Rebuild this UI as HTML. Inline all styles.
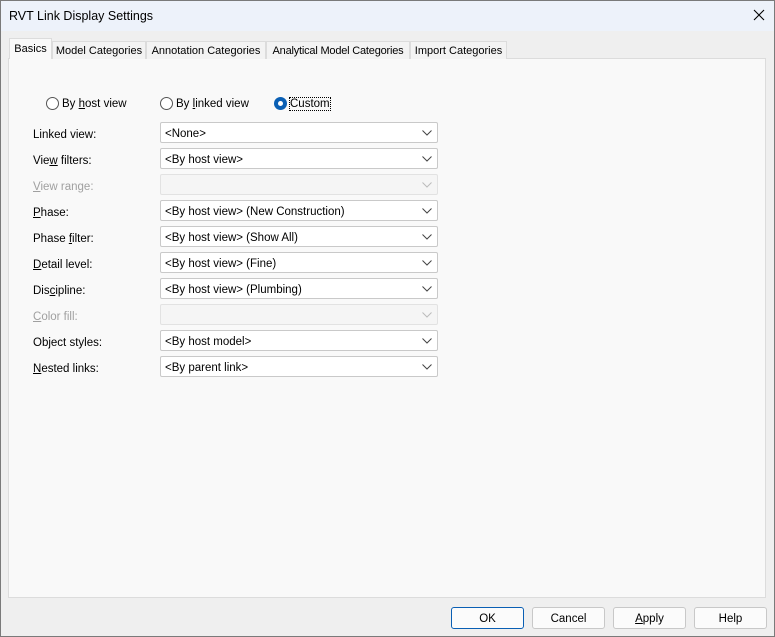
<!DOCTYPE html>
<html><head><style>
*{box-sizing:border-box;margin:0;padding:0}
body{width:775px;height:637px;background:#efefef;font-family:"Liberation Sans",sans-serif;font-size:11.5px;color:#000;position:relative;overflow:hidden}
.frame{position:absolute;left:0;top:0;width:775px;height:637px;border:1px solid #7a7a7a;pointer-events:none}
.title{position:absolute;left:0;top:0;width:775px;height:31px;background:#edf2fa}
.title span{position:absolute;left:9px;top:9px;font-size:12.5px}
.x{position:absolute;right:10px;top:9px}
.panel{position:absolute;left:8px;top:58px;width:758px;height:540px;background:#f9f9f9;border:1px solid #dcdcdc}
.tab{position:absolute;top:41px;height:18px;border:1px solid #dcdcdc;border-bottom:none;background:#f3f3f3;padding-top:3px;text-align:center;white-space:nowrap;overflow:hidden;font-size:11px}
.tab.sel{top:38px;height:21px;background:#f9f9f9;padding-top:4px}
.lbl{position:absolute;left:33px;top:0}
.dis{color:#a0a0a0}
.cb{position:absolute;left:160px;width:278px;height:21px;background:#fff;border:1px solid #c9c9c9;border-radius:2px;padding:5px 0 0 4px}
.cb.d{background:#f5f5f5;border-color:#e2e2e2}
.cb svg{position:absolute;right:5px;top:7px}
.radio{position:absolute;top:97px;display:flex;align-items:center}
.rc{width:13px;height:13px;border-radius:50%;border:1px solid #555;background:#fff;margin-right:3px}
.rc.on{border:none;background:#0a5fb4;display:flex;align-items:center;justify-content:center}
.rc.on::after{content:"";width:5px;height:5px;border-radius:50%;background:#fff}
.btn{position:absolute;top:607px;width:73px;height:22px;border:1px solid #c8c8c8;border-radius:3px;background:#fbfbfb;text-align:center;padding-top:5px}
u{text-decoration:underline}
</style></head><body>
<div class="title"><span>RVT Link Display Settings</span>
<svg class="x" width="12" height="12" viewBox="0 0 12 12"><path d="M1 1L11 11M11 1L1 11" stroke="#000" stroke-width="1.1"/></svg></div>
<div class="panel"></div>
<div class="tab sel" style="left:9px;width:43px">Basics</div>
<div class="tab" style="left:52px;width:94px">Model Categories</div>
<div class="tab" style="left:146px;width:120px">Annotation Categories</div>
<div class="tab" style="left:266px;width:144px;letter-spacing:-0.2px">Analytical Model Categories</div>
<div class="tab" style="left:410px;width:97px">Import Categories</div>

<div class="radio" style="left:46px"><div class="rc"></div><span>By <u>h</u>ost view</span></div>
<div class="radio" style="left:160px"><div class="rc"></div><span>By <u>l</u>inked view</span></div>
<div class="radio" style="left:274px"><div class="rc on"></div><span style="outline:1px dotted #000">Custom</span></div>

<div class="lbl" style="top:129px">Linked view:</div><div class="cb" style="top:122px">&lt;None&gt;<svg width="10" height="6"><path d="M0.5 0.5L5 5L9.5 0.5" fill="none" stroke="#444"/></svg></div>
<div class="lbl" style="top:155px">Vie<u>w</u> filters:</div><div class="cb" style="top:148px">&lt;By host view&gt;<svg width="10" height="6"><path d="M0.5 0.5L5 5L9.5 0.5" fill="none" stroke="#444"/></svg></div>
<div class="lbl dis" style="top:181px"><u>V</u>iew range:</div><div class="cb d" style="top:174px"><svg width="10" height="6"><path d="M0.5 0.5L5 5L9.5 0.5" fill="none" stroke="#bbb"/></svg></div>
<div class="lbl" style="top:207px"><u>P</u>hase:</div><div class="cb" style="top:200px">&lt;By host view&gt; (New Construction)<svg width="10" height="6"><path d="M0.5 0.5L5 5L9.5 0.5" fill="none" stroke="#444"/></svg></div>
<div class="lbl" style="top:233px">Phase <u>f</u>ilter:</div><div class="cb" style="top:226px">&lt;By host view&gt; (Show All)<svg width="10" height="6"><path d="M0.5 0.5L5 5L9.5 0.5" fill="none" stroke="#444"/></svg></div>
<div class="lbl" style="top:259px"><u>D</u>etail level:</div><div class="cb" style="top:252px">&lt;By host view&gt; (Fine)<svg width="10" height="6"><path d="M0.5 0.5L5 5L9.5 0.5" fill="none" stroke="#444"/></svg></div>
<div class="lbl" style="top:285px">Dis<u>c</u>ipline:</div><div class="cb" style="top:278px">&lt;By host view&gt; (Plumbing)<svg width="10" height="6"><path d="M0.5 0.5L5 5L9.5 0.5" fill="none" stroke="#444"/></svg></div>
<div class="lbl dis" style="top:311px"><u>C</u>olor fill:</div><div class="cb d" style="top:304px"><svg width="10" height="6"><path d="M0.5 0.5L5 5L9.5 0.5" fill="none" stroke="#bbb"/></svg></div>
<div class="lbl" style="top:337px">Ob<u>j</u>ect styles:</div><div class="cb" style="top:330px">&lt;By host model&gt;<svg width="10" height="6"><path d="M0.5 0.5L5 5L9.5 0.5" fill="none" stroke="#444"/></svg></div>
<div class="lbl" style="top:363px"><u>N</u>ested links:</div><div class="cb" style="top:356px">&lt;By parent link&gt;<svg width="10" height="6"><path d="M0.5 0.5L5 5L9.5 0.5" fill="none" stroke="#444"/></svg></div>

<div class="btn" style="left:451px;border-color:#0a5fb4">OK</div>
<div class="btn" style="left:532px">Cancel</div>
<div class="btn" style="left:613px"><u>A</u>pply</div>
<div class="btn" style="left:694px">Help</div>
<div class="frame"></div>
</body></html>
